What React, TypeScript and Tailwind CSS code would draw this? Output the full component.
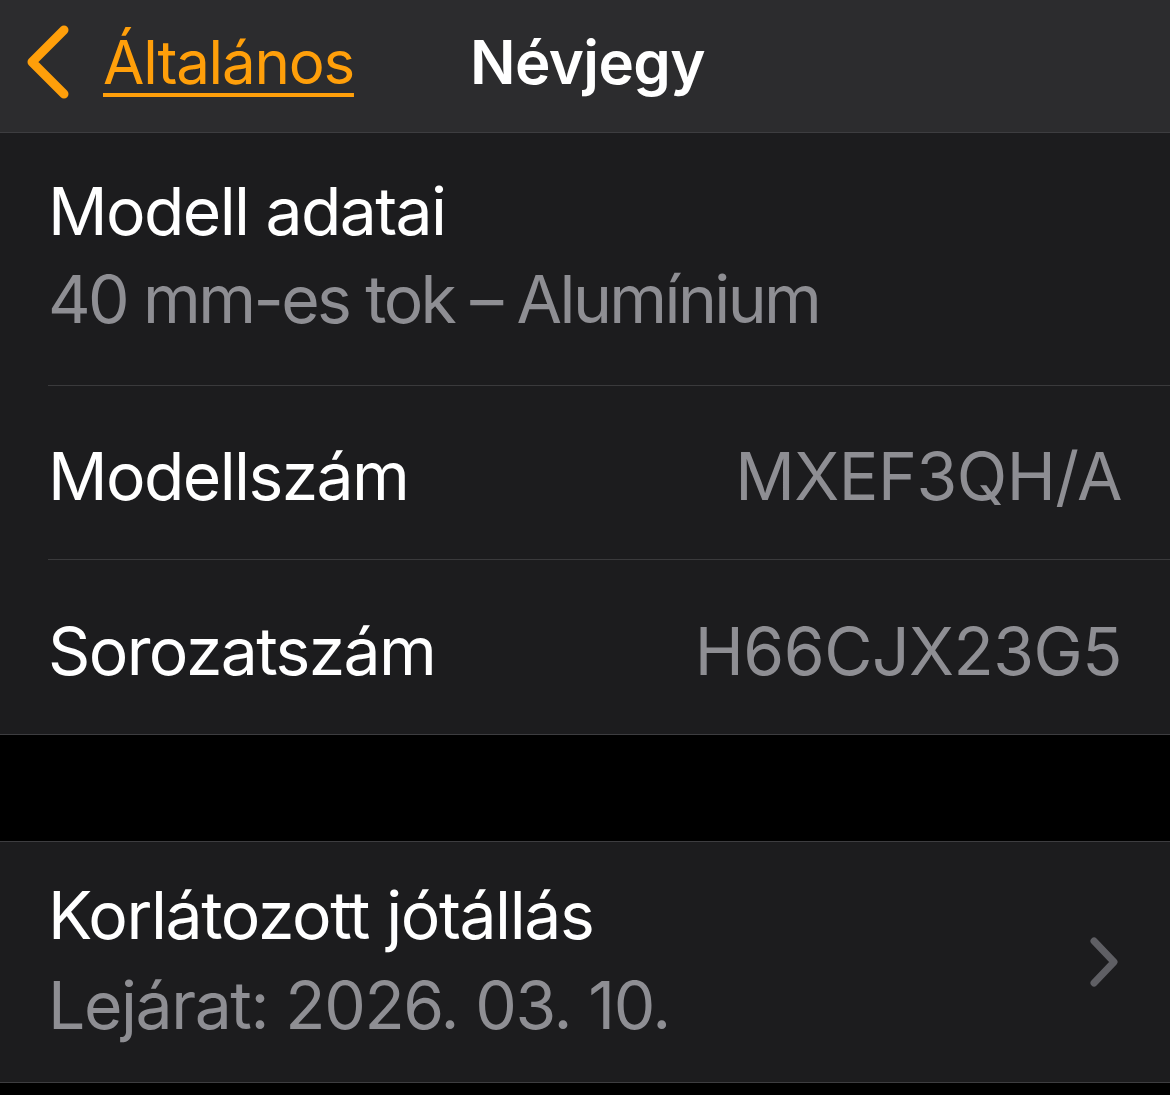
const font = { fontFamily: "Inter, 'Liberation Sans', sans-serif" };

function ValueRow({ label, value, border }: { label: string; value: string; border?: boolean }) {
  return (
    <div className="pl-[48px]">
      <div
        className={`h-[174px] flex items-center justify-between pr-[48px] pt-[8px] ${
          border ? "border-b border-[#3a3a3c]" : ""
        }`}
      >
        <span className="text-white text-[66px] tracking-[-1.6px]">{label}</span>
        <span className="text-[#8e8e93] text-[66px] tracking-[-0.5px]">{value}</span>
      </div>
    </div>
  );
}

export default function App() {
  return (
    <div className="w-[1170px] h-[1095px] bg-black overflow-hidden" style={font}>
      <div className="h-[133px] bg-[#2c2c2e] border-b border-[#3d3d40] flex items-center pb-[8px]">
        <div className="flex items-center text-[#ff9f0a]">
          <svg width="52" height="76" viewBox="0 0 52 76" className="ml-[20px] mr-[31px]">
            <path
              d="M44 6 L12 38 L44 70"
              fill="none"
              stroke="#ff9f0a"
              strokeWidth="9"
              strokeLinecap="round"
              strokeLinejoin="round"
            />
          </svg>
          <span className="text-[60px] underline decoration-[4px] underline-offset-[9px] tracking-[-1.2px]">
            Általános
          </span>
        </div>
        <span className="ml-[116px] text-white text-[60px] font-semibold tracking-[-0.6px]">Névjegy</span>
      </div>

      <div className="bg-[#1c1c1e] border-b border-[#3d3d40]">
        <div className="pl-[48px]">
          <div className="h-[253px] border-b border-[#3a3a3c] flex flex-col justify-center pb-[8px]">
            <span className="text-white text-[66px] leading-[88px] tracking-[-1.6px]">Modell adatai</span>
            <span className="text-[#8e8e93] text-[66px] leading-[88px] tracking-[-2.6px]">
              40 mm-es tok – Alumínium
            </span>
          </div>
        </div>
        <ValueRow label="Modellszám" value="MXEF3QH/A" border />
        <ValueRow label="Sorozatszám" value="H66CJX23G5" />
      </div>

      <div className="h-[106px]" />

      <div className="bg-[#1c1c1e] border-y border-[#3d3d40] h-[242px] pl-[48px] pr-[50px] flex items-center justify-between">
        <div className="flex flex-col pb-[4px]">
          <span className="text-white text-[66px] leading-[90px] tracking-[-1.4px]">Korlátozott jótállás</span>
          <span className="text-[#8e8e93] text-[66px] leading-[90px] tracking-[-1.4px]">Lejárat: 2026. 03. 10.</span>
        </div>
        <svg width="32" height="52" viewBox="0 0 32 52">
          <path
            d="M6 5 L26 26 L6 47"
            fill="none"
            stroke="#5f5f64"
            strokeWidth="7"
            strokeLinecap="round"
            strokeLinejoin="round"
          />
        </svg>
      </div>
    </div>
  );
}
